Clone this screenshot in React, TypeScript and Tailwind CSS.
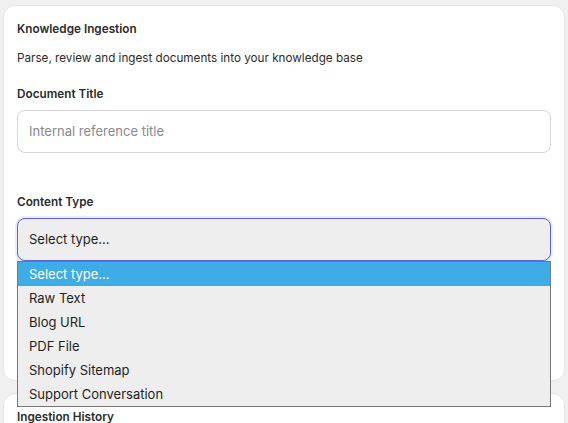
const options = ["Select type...", "Raw Text", "Blog URL", "PDF File", "Shopify Sitemap", "Support Conversation"];

export default function App() {
  return (
    <div
      className="relative h-[423px] w-[568px] overflow-hidden bg-[#f0f0f0] pt-[5px] text-[#2b2b2b]"
      style={{ fontFamily: "Inter, 'Noto Sans', sans-serif" }}
    >
      {/* main card */}
      <div className="mx-[3px] h-[376px] rounded-[12px] border border-[#e4e4e4] bg-white px-[13px] pt-[15px]">
        <h2 className="text-[11.75px] font-semibold leading-[16px]">Knowledge Ingestion</h2>
        <p className="mt-[13px] text-[11.7px] leading-[16px]">
          Parse, review and ingest documents into your knowledge base
        </p>

        <label className="mt-[20px] block text-[11.75px] font-semibold leading-[16px]">Document Title</label>
        <div className="mt-[8px] flex h-[43px] items-center rounded-[8px] border border-[#d6d6dc] px-[11px] pt-[1px] text-[13px] text-[#8a8a8a]">
          Internal reference title
        </div>

        <label className="mt-[41px] block text-[11.75px] font-semibold leading-[16px]">Content Type</label>
        <div className="mt-[8px] flex h-[43px] items-center rounded-[8px] border border-[#5b63d8] bg-[#eeeeee] px-[11px] pt-[1px] text-[13px] text-[#1f1f1f] shadow-[0_0_0_2px_rgba(99,102,241,0.12)]">
          Select type...
        </div>
      </div>

      {/* second card */}
      <div className="mx-[3px] mt-[12px] h-[60px] rounded-[12px] border border-[#e4e4e4] bg-white px-[13px] pt-[15px]">
        <h2 className="text-[11.75px] font-semibold leading-[16px]">Ingestion History</h2>
      </div>

      {/* open native select list */}
      <ul className="absolute left-[17px] top-[261px] w-[534px] border border-[#767676] bg-[#eeeeee] text-[13px] text-[#1f1f1f]">
        {options.map((o, i) => (
          <li
            key={o}
            className={
              i === 0
                ? "flex h-[24px] items-center bg-[#3eace6] px-[11px] pt-[1px] text-white"
                : "flex h-[24px] items-center px-[11px] pt-[1px]"
            }
          >
            {o}
          </li>
        ))}
      </ul>
    </div>
  );
}
